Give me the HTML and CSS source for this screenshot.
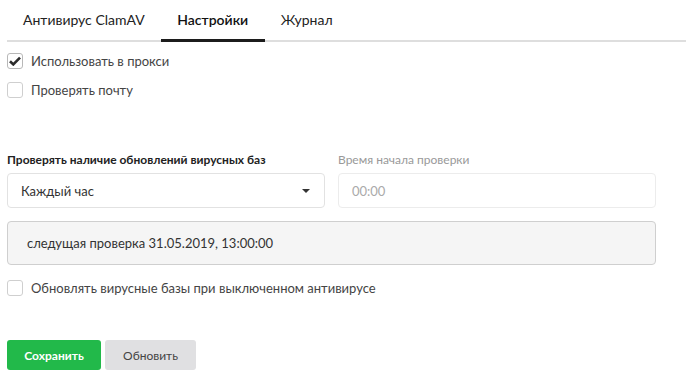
FILE: index.html
```html
<!DOCTYPE html>
<html lang="ru">
<head>
    <meta charset="UTF-8">
    <title>Антивирус ClamAV</title>
    <link rel="stylesheet" href="styles.css">
</head>
<body>
    <div class="tabs">
        <div class="tab">Антивирус ClamAV</div>
        <div class="tab active">Настройки</div>
        <div class="tab">Журнал</div>
    </div>

    <div class="settings">
        <label class="check">
            <span class="box checked">
                <svg width="12" height="10" viewBox="0 0 12 10"><path d="M1 5.2 L4.3 8.4 L11 1.6" fill="none" stroke="#2b2b2b" stroke-width="2.6"/></svg>
            </span>
            Использовать в прокси
        </label>
        <label class="check">
            <span class="box"></span>
            Проверять почту
        </label>

        <div class="fields">
            <div class="field">
                <div class="field-label">Проверять наличие обновлений вирусных баз</div>
                <div class="select">
                    <span>Каждый час</span>
                    <span class="caret"></span>
                </div>
            </div>
            <div class="field">
                <div class="field-label muted">Время начала проверки</div>
                <div class="input disabled">00:00</div>
            </div>
        </div>

        <div class="notice">следущая проверка 31.05.2019, 13:00:00</div>

        <label class="check">
            <span class="box"></span>
            Обновлять вирусные базы при выключенном антивирусе
        </label>

        <div class="actions">
            <button class="btn btn-save">Сохранить</button>
            <button class="btn btn-update">Обновить</button>
        </div>
    </div>
</body>
</html>
```

FILE: styles.css
```css
body {
    margin: 0;
    font-family: Lato, "Open Sans", sans-serif;
    font-size: 13px;
    color: #333;
    background: #fff;
}
.tabs {
    display: flex;
    margin-left: 7px;
    height: 40px;
    border-bottom: 2px solid #dedede;
}
.tab {
    padding: 0 16px;
    line-height: 40px;
    font-size: 14px;
    color: #222;
}
.tab.active {
    font-weight: 600;
    color: #111;
    border-bottom: 3px solid #1c1c1c;
    margin-bottom: -2px;
    padding: 0 16.5px;
}
.settings {
    padding: 11px 30px 0 7px;
}
.check {
    display: flex;
    align-items: center;
    height: 16px;
    margin-bottom: 13px;
    color: #444;
}
.box {
    width: 14px;
    height: 14px;
    border: 1px solid #cfcfcf;
    border-radius: 3px;
    margin-right: 8px;
    display: flex;
    align-items: center;
    justify-content: center;
}
.box.checked {
    border-color: #b8b8b8;
}
.fields {
    display: flex;
    gap: 13px;
    margin-top: 54px;
}
.field {
    flex: 1;
}
.field-label {
    font-size: 12px;
    font-weight: bold;
    color: #222;
    line-height: 15px;
    margin-bottom: 6px;
}
.field-label.muted {
    font-weight: normal;
    color: #999;
}
.select, .input {
    box-sizing: border-box;
    height: 35px;
    border: 1px solid #e2e2e2;
    border-radius: 4px;
    display: flex;
    align-items: center;
    justify-content: space-between;
    padding: 0 14px 0 13px;
    color: #333;
}
.input.disabled {
    color: #aaa;
    border-color: #ececec;
}
.caret {
    width: 0;
    height: 0;
    border-left: 4px solid transparent;
    border-right: 4px solid transparent;
    border-top: 4px solid #333;
}
.notice {
    box-sizing: border-box;
    margin-top: 13px;
    height: 44px;
    line-height: 42px;
    padding-left: 19px;
    background: #f5f5f5;
    border: 1px solid #cfcfcf;
    border-radius: 4px;
    color: #333;
    margin-bottom: 15px;
}
.actions {
    display: flex;
    gap: 4px;
    margin-top: 44px;
}
.btn {
    font-family: Lato, sans-serif;
    font-size: 12px;
    height: 30px;
    border: none;
    border-radius: 3px;
    cursor: pointer;
}
.btn-save {
    width: 94px;
    background: #22b94a;
    color: #fff;
    font-weight: bold;
}
.btn-update {
    width: 91px;
    background: #e0e0e2;
    color: #444;
}
```
